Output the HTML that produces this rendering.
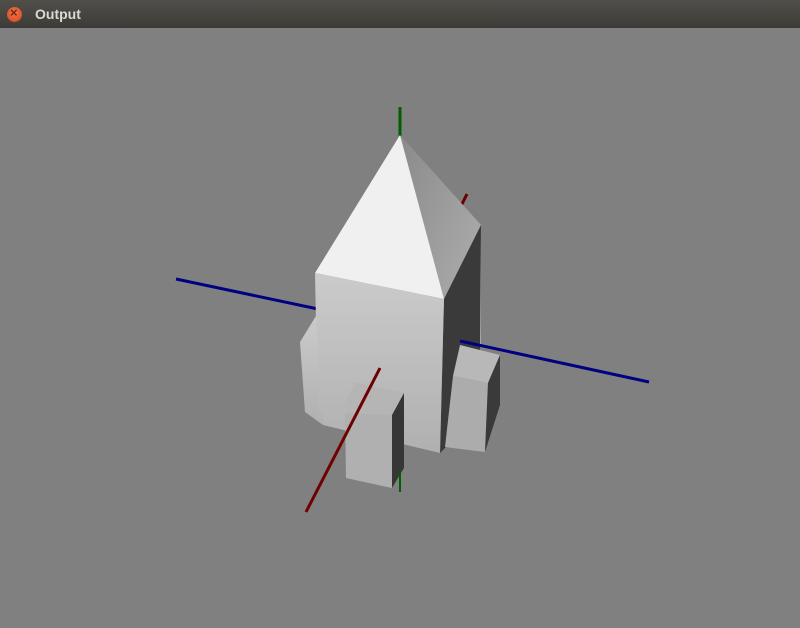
<!DOCTYPE html>
<html><head><style>
body{margin:0;width:800px;height:628px;overflow:hidden;background:#808080;font-family:"Liberation Sans",sans-serif}
.bar{position:absolute;left:0;top:0;width:800px;height:28px;background:linear-gradient(#514f4a,#3c3b37)}
.close{position:absolute;left:7px;top:7px;width:15px;height:15px;border-radius:50%;background:radial-gradient(circle at 50% 40%,#f2754b,#d4441c);}
.close:after{content:"×";position:absolute;left:3px;top:-2px;font-size:13px;color:#6a2a14;font-weight:bold}
.t{position:absolute;left:35px;top:6px;color:#dcdad5;font-weight:bold;font-size:14px}
svg{position:absolute;left:0;top:0}
</style></head><body>
<div class="bar"><div class="close"></div><div class="t">Output</div></div>
<svg width="800" height="628">
<defs>
<linearGradient id="rf" x1="0" y1="0" x2="1" y2="1"><stop offset="0" stop-color="#8a8a8a"/><stop offset="1" stop-color="#b2b2b2"/></linearGradient>
<linearGradient id="fr" x1="0" y1="0" x2="0" y2="1"><stop offset="0" stop-color="#cbcbcb"/><stop offset="1" stop-color="#b0b0b0"/></linearGradient>
</defs>
<line x1="400" y1="107" x2="400" y2="136" stroke="#006000" stroke-width="3"/>
<line x1="467" y1="194" x2="461" y2="206" stroke="#6a0000" stroke-width="3"/>
<line x1="176" y1="279" x2="318" y2="309" stroke="#000080" stroke-width="3"/>
<polygon points="400,135 481,225 481,345 444,299" fill="url(#rf)"/>
<polygon points="444,299 481,225 480,350 453,376 453,440 440,453" fill="#3a3a3a"/>
<polygon points="400,135 315,273 444,299" fill="#f0f0f0"/>
<polygon points="315,273 444,299 440,453 323,425 318,420" fill="url(#fr)"/>
<polygon points="300,342 316,316 318,340 318,412 323,413 323,425 305,412" fill="url(#fr)"/>
<polygon points="453,376 460,345 500,355 488,383" fill="#b8b8b8"/>
<polygon points="453,376 488,383 485,452 445,447" fill="#acacac"/>
<polygon points="488,383 500,355 500,405 485,452" fill="#3a3a3a"/>
<line x1="460" y1="341" x2="649" y2="382" stroke="#000080" stroke-width="3"/>
<polygon points="343,408 355,382 404,393 392,415" fill="#b5b5b5"/>
<polygon points="345,413 392,415 392,488 346,478" fill="#b0b0b0"/>
<polygon points="392,415 404,393 404,468 392,488" fill="#363636"/>
<line x1="380" y1="368" x2="306" y2="512" stroke="#700000" stroke-width="3"/>
<line x1="400" y1="470" x2="400" y2="492" stroke="#006000" stroke-width="2"/>
</svg>
</body></html>
